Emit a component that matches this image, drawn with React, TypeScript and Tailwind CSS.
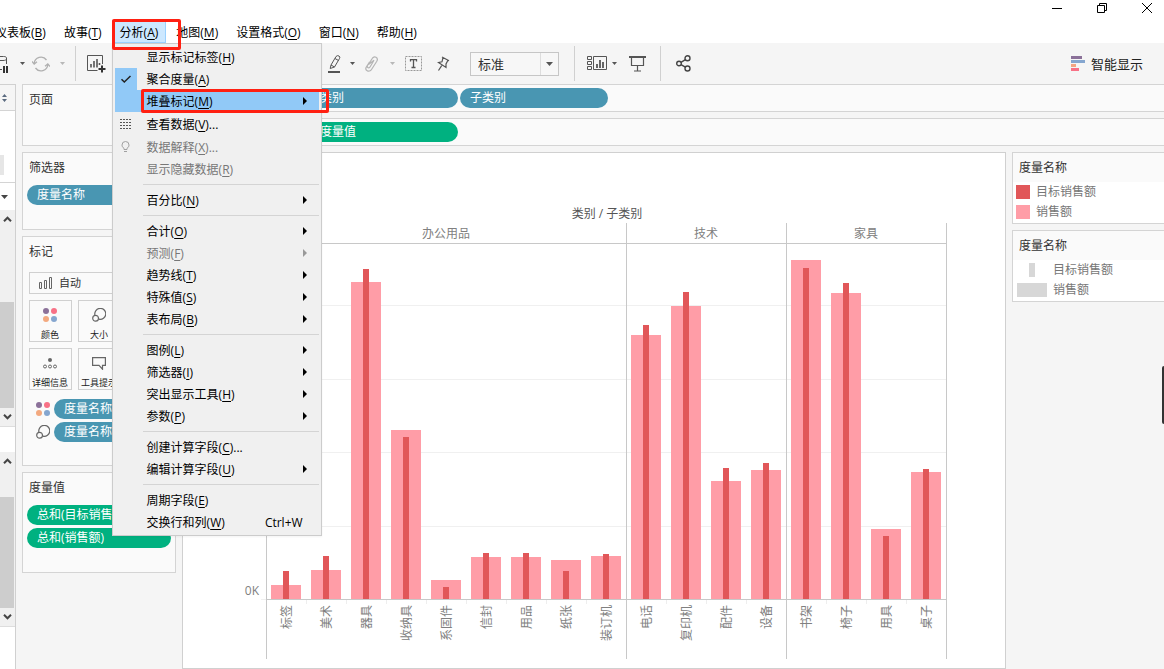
import type { ReactNode } from 'react';
import clsx from 'clsx';

interface MenuEntry {
  label: string;
  hotkey: string;
  suffix?: string;
  shortcut?: string;
  submenu?: boolean;
  disabled?: boolean;
  checked?: boolean;
  active?: boolean;
  icon?: ReactNode;
}

interface Mark {
  name: string;
  sales: number;
  target: number;
}

interface Category {
  name: string;
  marks: Mark[];
}

const categories: Category[] = [
  {
    name: '办公用品',
    marks: [
      { name: '标签', sales: 14, target: 28 },
      { name: '美术', sales: 29, target: 43 },
      { name: '器具', sales: 317, target: 330 },
      { name: '收纳具', sales: 169, target: 162 },
      { name: '系固件', sales: 19, target: 12 },
      { name: '信封', sales: 42, target: 46 },
      { name: '用品', sales: 42, target: 46 },
      { name: '纸张', sales: 39, target: 28 },
      { name: '装订机', sales: 43, target: 45 },
    ],
  },
  {
    name: '技术',
    marks: [
      { name: '电话', sales: 264, target: 274 },
      { name: '复印机', sales: 293, target: 307 },
      { name: '配件', sales: 118, target: 131 },
      { name: '设备', sales: 129, target: 136 },
    ],
  },
  {
    name: '家具',
    marks: [
      { name: '书架', sales: 339, target: 331 },
      { name: '椅子', sales: 306, target: 316 },
      { name: '用具', sales: 70, target: 63 },
      { name: '桌子', sales: 127, target: 130 },
    ],
  },
];

const GridIcon = () => (
  <svg width="12" height="10" viewBox="0 0 12 10" fill="none" stroke="#555" strokeDasharray="2 1" shapeRendering="crispEdges">
    <path d="M0 .5H12M0 3.5H12M0 6.5H12M0 9.5H12" />
  </svg>
);

const BulbIcon = () => (
  <svg width="9" height="12" viewBox="0 0 9 12" fill="none" stroke="#a0a0a0">
    <path d="M3 8.5V7.3C1.6 6.5 1 5.300 1 4a3.500 3.500 0 0 1 7 0c0 1.300-.6 2.500-2 3.300v1.200zM3 10.500h3" />
  </svg>
);

const menuGroups: MenuEntry[][] = [
  [
    { label: '显示标记标签', hotkey: 'H' },
    { label: '聚合度量', hotkey: 'A', checked: true },
    { label: '堆叠标记', hotkey: 'M', submenu: true, active: true },
    { label: '查看数据', hotkey: 'V', suffix: '...', icon: <GridIcon /> },
    { label: '数据解释', hotkey: 'X', suffix: '...', disabled: true, icon: <BulbIcon /> },
    { label: '显示隐藏数据', hotkey: 'R', disabled: true },
  ],
  [{ label: '百分比', hotkey: 'N', submenu: true }],
  [
    { label: '合计', hotkey: 'O', submenu: true },
    { label: '预测', hotkey: 'F', submenu: true, disabled: true },
    { label: '趋势线', hotkey: 'T', submenu: true },
    { label: '特殊值', hotkey: 'S', submenu: true },
    { label: '表布局', hotkey: 'B', submenu: true },
  ],
  [
    { label: '图例', hotkey: 'L', submenu: true },
    { label: '筛选器', hotkey: 'I', submenu: true },
    { label: '突出显示工具', hotkey: 'H', submenu: true },
    { label: '参数', hotkey: 'P', submenu: true },
  ],
  [
    { label: '创建计算字段', hotkey: 'C', suffix: '...' },
    { label: '编辑计算字段', hotkey: 'U', submenu: true },
  ],
  [
    { label: '周期字段', hotkey: 'E' },
    { label: '交换行和列', hotkey: 'W', shortcut: 'Ctrl+W' },
  ],
];

const Hotkey = ({ children }: { children: string }) => (
  <>
    (<span className="underline underline-offset-2">{children}</span>)
  </>
);

function MenuRow({ item }: { item: MenuEntry }) {
  return (
    <button
      type="button"
      role="menuitem"
      disabled={item.disabled}
      className={clsx(
        'flex w-full items-center text-left leading-4',
        item.icon ? 'h-[23px]' : 'h-[22px]',
        item.disabled ? 'text-[#777]' : 'text-black',
        item.active && 'bg-[#91c9f7]',
      )}
    >
      <span className={clsx('flex h-full w-[22px] items-center justify-center', item.checked && 'bg-[#91c9f7]')}>
        {item.checked && (
          <svg width="12" height="9" viewBox="0 0 12 9" fill="none" stroke="#222" strokeWidth="1.500">
            <path d="M1.500 4.200 4.300 7 10.500 1" />
          </svg>
        )}
        {item.icon}
      </span>
      <span className="ml-[10px] pt-[2px] whitespace-nowrap">
        {item.label}
        <Hotkey>{item.hotkey}</Hotkey>
        {item.suffix}
      </span>
      {item.shortcut && <span className="ml-auto pt-[2px] pr-4">{item.shortcut}</span>}
      {item.submenu && (
        <svg className="mr-3 ml-auto" width="4" height="8" viewBox="0 0 4 8" fill={item.disabled ? '#999' : '#000'}>
          <path d="M0 0 4 4 0 8z" />
        </svg>
      )}
    </button>
  );
}

function AnalysisMenu() {
  return (
    <div
      role="menu"
      aria-label="分析"
      className="absolute top-full left-0 z-20 w-[210px] border border-[#ccc] bg-[#f0f0f0] p-[2px] shadow-xs"
    >
      {menuGroups.map((group, i) => (
        <div key={i}>
          {i > 0 && <hr className="my-1 ml-7 border-[#d4d4d4]" />}
          {group.map((item) => (
            <MenuRow key={item.label} item={item} />
          ))}
        </div>
      ))}
      <div className="pointer-events-none absolute top-[45px] -right-2 left-7 h-6 rounded-xs border-3 border-[#ff2012]" />
    </div>
  );
}

function MenuBar() {
  const before = [
    ['仪表板', 'B'],
    ['故事', 'T'],
  ];
  const after = [
    ['地图', 'M'],
    ['设置格式', 'O'],
    ['窗口', 'N'],
    ['帮助', 'H'],
  ];
  const item = ([label, key]: string[]) => (
    <button key={label} type="button" className="h-full px-2 pt-[2px] whitespace-nowrap">
      {label}
      <Hotkey>{key}</Hotkey>
    </button>
  );

  return (
    <nav className="-ml-[13px] flex h-[23px] gap-[2px] text-black">
      {before.map(item)}
      <div className="relative h-full">
        <button
          type="button"
          aria-haspopup="menu"
          aria-expanded="true"
          className="h-full border border-[#99d1ff] bg-[#cce8ff] px-[7px] pt-[2px] whitespace-nowrap"
        >
          分析
          <Hotkey>A</Hotkey>
        </button>
        <AnalysisMenu />
        <div className="pointer-events-none absolute -top-px -right-[15px] left-0 z-30 h-[31px] rounded-xs border-3 border-[#ff2012]" />
      </div>
      {after.map(item)}
    </nav>
  );
}

function WindowControls() {
  return (
    <div className="flex h-5 items-start justify-end gap-[35px] pt-[3px] pr-3">
      <button type="button" aria-label="最小化">
        <svg width="10" height="10" viewBox="0 0 10 10" stroke="#000">
          <path d="M0 5.500H10" />
        </svg>
      </button>
      <button type="button" aria-label="还原">
        <svg width="10" height="10" viewBox="0 0 10 10" fill="none" stroke="#000">
          <path d="M.5 2.500h7v7h-7zM2.500 2.500v-2h7v7h-2" />
        </svg>
      </button>
      <button type="button" aria-label="关闭">
        <svg width="10" height="10" viewBox="0 0 10 10" stroke="#000">
          <path d="M0 0 10 10M10 0 0 10" />
        </svg>
      </button>
    </div>
  );
}

const Caret = ({ color = '#555' }: { color?: string }) => (
  <svg width="5" height="3" viewBox="0 0 5 3" fill={color}>
    <path d="M0 0H5L2.500 3z" />
  </svg>
);

function Tool({ label, className, children }: { label: string; className: string; children: ReactNode }) {
  return (
    <button type="button" aria-label={label} className={clsx('flex h-8 shrink-0 items-center justify-center', className)}>
      {children}
    </button>
  );
}

const Divider = ({ className }: { className: string }) => (
  <div className={clsx('h-[35px] w-px shrink-0 bg-[#d0d0d0]', className)} />
);

function Toolbar() {
  return (
    <div className="flex h-[41px] items-center bg-[#f5f5f5]">
      <Tool label="暂停自动更新" className="w-4 justify-start!">
        <svg width="9" height="20" viewBox="0 0 9 20" fill="none" stroke="#555">
          <path d="M0 2.500h3.500c2 0 3 .6 3 1.500v6M0 6.500h3c2 0 3.500-.5 3.500-2M0 15.500h2" />
          <path d="M4 12v7M7 12v7" strokeWidth="2" stroke="#333" />
        </svg>
      </Tool>
      <Tool label="更新选项" className="w-3">
        <Caret />
      </Tool>
      <Tool label="运行更新" className="w-[26px]">
        <svg width="18" height="16" viewBox="0 0 18 16" fill="none" stroke="#b0b0b0" strokeWidth="1.300">
          <path d="M2.200 7.500A6.800 6.800 0 0 1 14.500 4M15.800 8.500A6.800 6.800 0 0 1 3.500 12" />
          <path d="M0 5.500 2.200 8 5 5.800M18 10.500 15.800 8 13 10.200" />
        </svg>
      </Tool>
      <Tool label="运行选项" className="w-4">
        <Caret color="#b8b8b8" />
      </Tool>
      <Divider className="ml-[5px]" />
      <Tool label="新建工作表" className="w-10">
        <svg width="19" height="18" viewBox="0 0 19 18" fill="none" stroke="#555">
          <path d="M15.500 9V.5H.5v15h10" />
          <path d="M4 12.500V9M7 12.500V6M10 12.500V4M12.500 10V8" strokeWidth="1.600" />
          <path d="M15 10.500v7M11.500 14h7" strokeWidth="2" stroke="#333" />
        </svg>
      </Tool>
      <div className="w-[206px] shrink-0" />
      <Tool label="突出显示" className="w-6">
        <svg width="13" height="18" viewBox="0 0 13 18" fill="none" stroke="#555">
          <path d="M3 10 8 1.500Q9.500 0 11 1t.5 2.500L6.500 12zM3 10l-.8 3.500L6.500 12M7 3.500l3.500 2" />
          <path d="M0 17h12" strokeWidth="2" />
        </svg>
      </Tool>
      <Tool label="突出显示选项" className="w-3">
        <Caret />
      </Tool>
      <Tool label="组成员" className="w-[26px]">
        <svg width="13" height="16" viewBox="0 0 13 16" fill="none" stroke="#b4b4b4" strokeWidth="1.200">
          <path d="M3.500 8.500 7 2.800C8 1 9.600.5 11 1.300s1.700 2.300.8 3.900L6.500 13.500C5.500 15.200 3.500 15.500 2.200 14.700S.4 12.500 1.300 11L4.500 6M3.500 8.500 9 4.300 5 11c-.6 1-1.600 1-2.200.5S2 10.200 2.500 9.500L7 3" />
        </svg>
      </Tool>
      <Tool label="组选项" className="w-4">
        <Caret color="#b8b8b8" />
      </Tool>
      <Tool label="显示标记标签" className="w-[26px]">
        <svg width="17" height="15" viewBox="0 0 17 15" fill="none" stroke="#555">
          <path d="M.5.5h16v14H.5z" strokeDasharray="2 1" stroke="#999" />
          <path d="M5.500 5.500V3.700h6v1.800M8.500 4v7.500M6.500 11.500h4" strokeWidth="1.300" />
        </svg>
      </Tool>
      <Tool label="固定轴" className="w-[34px]">
        <svg width="13" height="16" viewBox="0 0 13 16" fill="none" stroke="#555" strokeWidth="1.200">
          <path d="M5 1l7 3.800M6 1.500 5 5.800 1.500 6.500l7.500 5L9 8l2-3.700M5 9.200 1.500 14.500" />
        </svg>
      </Tool>
      <div className="relative ml-[10px] shrink-0">
        <select
          aria-label="适合"
          className="block h-6 w-[89px] appearance-none border border-[#c6c6c6] bg-[#f7f7f7] pl-[7px] text-[13px] leading-5 text-[#333]"
        >
          <option>标准</option>
        </select>
        <span className="pointer-events-none absolute inset-y-px right-px flex w-[18px] items-center justify-center border-l border-[#ddd]">
          <svg width="7" height="4" viewBox="0 0 7 4" fill="#555">
            <path d="M0 0H7L3.500 4z" />
          </svg>
        </span>
      </div>
      <Divider className="ml-[15px]" />
      <Tool label="显示卡" className="ml-3 w-5">
        <svg width="20" height="15" viewBox="0 0 20 15" fill="none" stroke="#555">
          <path d="M.5.500h4v3h-4zM.5 5.500h4v3h-4zM.5 10.500h4v3h-4zM6.500.5h13v13h-13z" />
          <path d="M10 12V8M13 12V4M16 12V6" strokeWidth="1.800" />
        </svg>
      </Tool>
      <Tool label="显示卡选项" className="w-[14px]">
        <Caret />
      </Tool>
      <Tool label="演示模式" className="w-8">
        <svg width="17" height="16" viewBox="0 0 17 16" fill="none" stroke="#555">
          <path d="M0 1h17" strokeWidth="2" />
          <path d="M2.500 1.500v8h12v-8M8.500 9.500v5M5 15h7" strokeWidth="1.200" />
        </svg>
      </Tool>
      <Divider className="ml-[7px]" />
      <Tool label="共享" className="w-11">
        <svg width="15" height="17" viewBox="0 0 15 17" fill="none" stroke="#444" strokeWidth="1.400">
          <circle cx="3" cy="8.500" r="2.300" />
          <circle cx="11.500" cy="3.200" r="2.500" />
          <circle cx="11.500" cy="13.500" r="2.500" />
          <path d="M5 7.300 9.400 4.600M5 9.700l4.400 2.500" />
        </svg>
      </Tool>
      <button type="button" className="mr-[21px] ml-auto flex items-center gap-[6px] text-[13px] whitespace-nowrap text-[#222]">
        <svg width="14" height="15" viewBox="0 0 14 15">
          <path d="M0 0h11v3H0z" fill="#8b7199" />
          <path d="M0 4h14v3H0z" fill="#85a6cf" />
          <path d="M0 8h5v3H0z" fill="#f3a583" />
          <path d="M0 12h8v3H0z" fill="#f87186" />
        </svg>
        智能显示
      </button>
    </div>
  );
}

const Chevron = ({ down }: { down?: boolean }) => (
  <svg width="9" height="6" viewBox="0 0 9 6" fill="none" stroke="#444" strokeWidth="2">
    <path d={down ? 'M1 .8 4.500 4.300 8 .8' : 'M1 5.200 4.500 1.700 8 5.200'} />
  </svg>
);

function ScrollTrack({ className, thumb }: { className: string; thumb: string }) {
  return (
    <div className={clsx('flex flex-col bg-[#f0f0f0] pr-px', className)}>
      <button type="button" aria-label="向上滚动" className="flex h-[18px] shrink-0 items-center justify-center">
        <Chevron />
      </button>
      <div className={clsx('bg-[#cdcdcd]', thumb)} />
      <button type="button" aria-label="向下滚动" className="flex h-[18px] shrink-0 items-center justify-center">
        <Chevron down />
      </button>
    </div>
  );
}

function DataPaneEdge() {
  return (
    <div className="flex w-4 shrink-0 flex-col border-t border-r border-[#d0d0d0] bg-white">
      <div className="flex h-[26px] items-center border-b border-[#d4d4d4] bg-[#f5f5f5] pl-[2px]">
        <svg width="5" height="8" viewBox="0 0 5 8" fill="#5b6b80">
          <path d="M0 3H5L2.500 0zM0 5H5L2.500 8z" />
        </svg>
      </div>
      <div className="flex h-[72px] items-end border-b border-[#d4d4d4] pb-[7px]">
        <div className="h-5 w-1 bg-[#e6e6e6]" />
      </div>
      <div className="flex h-[27px] items-center pl-px">
        <svg width="7" height="4" viewBox="0 0 7 4" fill="#444">
          <path d="M0 0H7L3.500 4z" />
        </svg>
      </div>
      <ScrollTrack className="h-[216px]" thumb="mt-[74px] h-[106px]" />
      <div className="h-[26px] border-t border-[#ddd]" />
      <ScrollTrack className="h-[174px]" thumb="mt-[27px] h-[111px]" />
      <div className="border-t border-[#ddd]" />
    </div>
  );
}

function Pill({ color = 'blue', className, children }: { color?: 'blue' | 'green'; className?: string; children: ReactNode }) {
  return (
    <div
      className={clsx(
        'flex h-5 items-center rounded-full px-[10px] leading-4 whitespace-nowrap text-white',
        color === 'blue' ? 'bg-[#4996b2]' : 'bg-[#00b180]',
        className,
      )}
    >
      {children}
    </div>
  );
}

function Card({ title, className, children }: { title: string; className: string; children?: ReactNode }) {
  return (
    <section className={clsx('border border-[#d4d4d4] bg-[#fafafa]', className)}>
      <h2 className="flex h-7 items-center pt-[2px] pl-[6px] text-[#333]">{title}</h2>
      {children}
    </section>
  );
}

const ColorIcon = () => (
  <svg width="14" height="14" viewBox="0 0 14 14" className="shrink-0">
    <circle cx="3" cy="3" r="3" fill="#8b7199" />
    <circle cx="11" cy="3" r="3" fill="#f87186" />
    <circle cx="3" cy="11" r="3" fill="#f3a97f" />
    <circle cx="11" cy="11" r="3" fill="#85a6cf" />
  </svg>
);

const SizeIcon = () => (
  <svg width="14" height="14" viewBox="0 0 14 14" fill="none" stroke="#666" strokeWidth="1.200" className="shrink-0">
    <path d="M2.900 7A5.500 5.500 0 1 1 7 11.200" />
    <circle cx="3.600" cy="10.300" r="2.900" />
  </svg>
);

function MarkButton({ label, children }: { label: string; children: ReactNode }) {
  return (
    <button
      type="button"
      className="flex h-[42px] flex-1 flex-col items-center border border-[#d0d0d0] pr-px text-[9px] leading-3 whitespace-nowrap text-[#222]"
    >
      <span className="flex h-7 shrink-0 items-center">{children}</span>
      {label}
    </button>
  );
}

function Shelves() {
  return (
    <div className="flex w-[154px] shrink-0 flex-col gap-[6px]">
      <Card title="页面" className="h-[62px]" />
      <Card title="筛选器" className="h-[78px]">
        <Pill className="mx-1 mt-1">度量名称</Pill>
      </Card>
      <Card title="标记" className="h-[230px]">
        <div className="relative mx-[6px] mt-[7px]">
          <select
            aria-label="标记类型"
            className="block h-[22px] w-full appearance-none border border-[#d0d0d0] bg-[#fafafa] pl-[29px] text-[11px] text-[#333]"
          >
            <option>自动</option>
          </select>
          <svg className="absolute top-[5px] left-[10px]" width="14" height="12" viewBox="0 0 14 12" fill="none" stroke="#666">
            <path d="M.5 5.500h2v6h-2zM5.500 3.500h2v8h-2zM10.500.5h2v11h-2z" />
          </svg>
        </div>
        <div className="mx-[6px] mt-[6px] grid grid-cols-[43px_43px_43px] gap-[6px]">
          <MarkButton label="颜色">
            <ColorIcon />
          </MarkButton>
          <MarkButton label="大小">
            <SizeIcon />
          </MarkButton>
          <div />
          <MarkButton label="详细信息">
            <svg width="14" height="11" viewBox="0 0 14 11" fill="none" stroke="#666">
              <circle cx="7" cy="2" r="2" fill="#666" stroke="none" />
              <circle cx="2" cy="8.500" r="1.500" />
              <circle cx="7" cy="8.500" r="1.500" />
              <circle cx="12" cy="8.500" r="1.500" />
            </svg>
          </MarkButton>
          <MarkButton label="工具提示">
            <svg width="14" height="13" viewBox="0 0 14 13" fill="none" stroke="#666" strokeWidth="1.200">
              <path d="M.6.6h12.800v7.800h-2.900v3.800L7 8.400H.6z" />
            </svg>
          </MarkButton>
        </div>
        <div className="mt-[9px] mr-1 ml-[13px] flex flex-col gap-[3px]">
          <div className="flex items-center gap-1">
            <ColorIcon />
            <Pill className="flex-1">度量名称</Pill>
          </div>
          <div className="flex items-center gap-1">
            <SizeIcon />
            <Pill className="flex-1">度量名称</Pill>
          </div>
        </div>
      </Card>
      <Card title="度量值" className="h-[101px]">
        <div className="mx-1 mt-1 flex flex-col gap-[3px]">
          <Pill color="green">总和(目标销售额)</Pill>
          <Pill color="green">总和(销售额)</Pill>
        </div>
      </Card>
    </div>
  );
}

const CELL = 40;
const LEFT = 83;
const RIGHT = 763;
const BASE = 446;

function Chart() {
  let column = 0;

  return (
    <svg width="822" height="514" viewBox="0 0 822 514" className="block text-[12px]" role="img" aria-label="类别 / 子类别">
      <g stroke="#f0f0f0">
        {[152, 226, 299, 373].map((y) => (
          <path key={y} d={`M${LEFT} ${y}.5H${RIGHT}`} />
        ))}
        <path d={`M78 ${BASE}.5H${LEFT}`} />
      </g>
      <text x="424" y="65" textAnchor="middle" fill="#555">
        类别 / 子类别
      </text>
      <text x="76" y={BASE - 4} textAnchor="end" fill="#808080">
        0K
      </text>
      {categories.map((category) => {
        const start = LEFT + column * CELL;
        const end = start + category.marks.length * CELL;
        column += category.marks.length;

        return (
          <g key={category.name}>
            <text x={(start + end) / 2} y="85" textAnchor="middle" fill="#808080">
              {category.name}
            </text>
            {category.marks.map((mark, i) => {
              const x = start + i * CELL;
              return (
                <g key={mark.name}>
                  <rect x={x + 5} y={BASE - mark.sales} width="30" height={mark.sales} fill="#ff9da7" />
                  <rect x={x + 17} y={BASE - mark.target} width="6" height={mark.target} fill="#e15759" />
                  {i > 0 && <path d={`M${x}.5 ${BASE}v5`} stroke="#eee" />}
                  <text transform={`translate(${x + 25} ${BASE + 6}) rotate(-90)`} textAnchor="end" fill="#808080">
                    {mark.name}
                  </text>
                </g>
              );
            })}
            <path d={`M${end}.5 70V506`} stroke="#c8c8c8" />
          </g>
        );
      })}
      <path d={`M${LEFT}.5 70V506M${LEFT} 90.500H${RIGHT}M${LEFT} ${BASE}.5H${RIGHT}`} stroke="#c8c8c8" />
    </svg>
  );
}

function Legend({ children }: { children: ReactNode }) {
  return (
    <section className="border-y border-l border-[#d4d4d4] bg-white pb-px text-[#777]">
      <h2 className="flex h-[29px] items-center bg-[#fafafa] pt-px pl-[6px] text-[#333]">度量名称</h2>
      <ul>{children}</ul>
    </section>
  );
}

function Worksheet() {
  return (
    <main className="flex min-w-0 flex-1 flex-col gap-[6px]">
      <div className="flex h-7 shrink-0 items-center gap-[2px] border-y border-l border-[#d4d4d4] bg-[#fafafa] pl-[127px]">
        <Pill className="w-[148px]">类别</Pill>
        <Pill className="w-[148px]">子类别</Pill>
      </div>
      <div className="flex h-7 shrink-0 items-center border-y border-l border-[#d4d4d4] bg-[#fafafa] pl-[127px]">
        <Pill color="green" className="w-[148px]">
          度量值
        </Pill>
      </div>
      <div className="flex min-h-0 flex-1 gap-[6px]">
        <div className="min-w-0 flex-1 overflow-hidden border border-[#d0d0d0] bg-white">
          <Chart />
        </div>
        <aside className="flex w-[152px] shrink-0 flex-col gap-[6px]">
          <Legend>
            <li className="flex h-5 items-center gap-[6px] pl-[3px]">
              <span className="size-[14px] bg-[#e15759]" />
              目标销售额
            </li>
            <li className="flex h-5 items-center gap-[6px] pl-[3px]">
              <span className="size-[14px] bg-[#ff9da7]" />
              销售额
            </li>
          </Legend>
          <Legend>
            <li className="flex h-5 items-center gap-[6px] pl-1">
              <span className="flex w-[30px] justify-center">
                <span className="h-[14px] w-[6px] bg-[#d7d7d7]" />
              </span>
              目标销售额
            </li>
            <li className="flex h-5 items-center gap-[6px] pl-1">
              <span className="h-[14px] w-[30px] bg-[#d7d7d7]" />
              销售额
            </li>
          </Legend>
        </aside>
      </div>
    </main>
  );
}

export default function App() {
  return (
    <div className="relative flex h-screen flex-col overflow-hidden bg-white font-['Open_Sans','Noto_Sans_CJK_SC',sans-serif] text-[12px] leading-4">
      <WindowControls />
      <MenuBar />
      <Toolbar />
      <div className="flex min-h-0 flex-1 gap-[6px] bg-[#f5f5f5]">
        <DataPaneEdge />
        <Shelves />
        <Worksheet />
      </div>
      <div className="absolute top-[366px] right-0 h-[58px] w-[2px] rounded-l-xs bg-[#333]" />
    </div>
  );
}
